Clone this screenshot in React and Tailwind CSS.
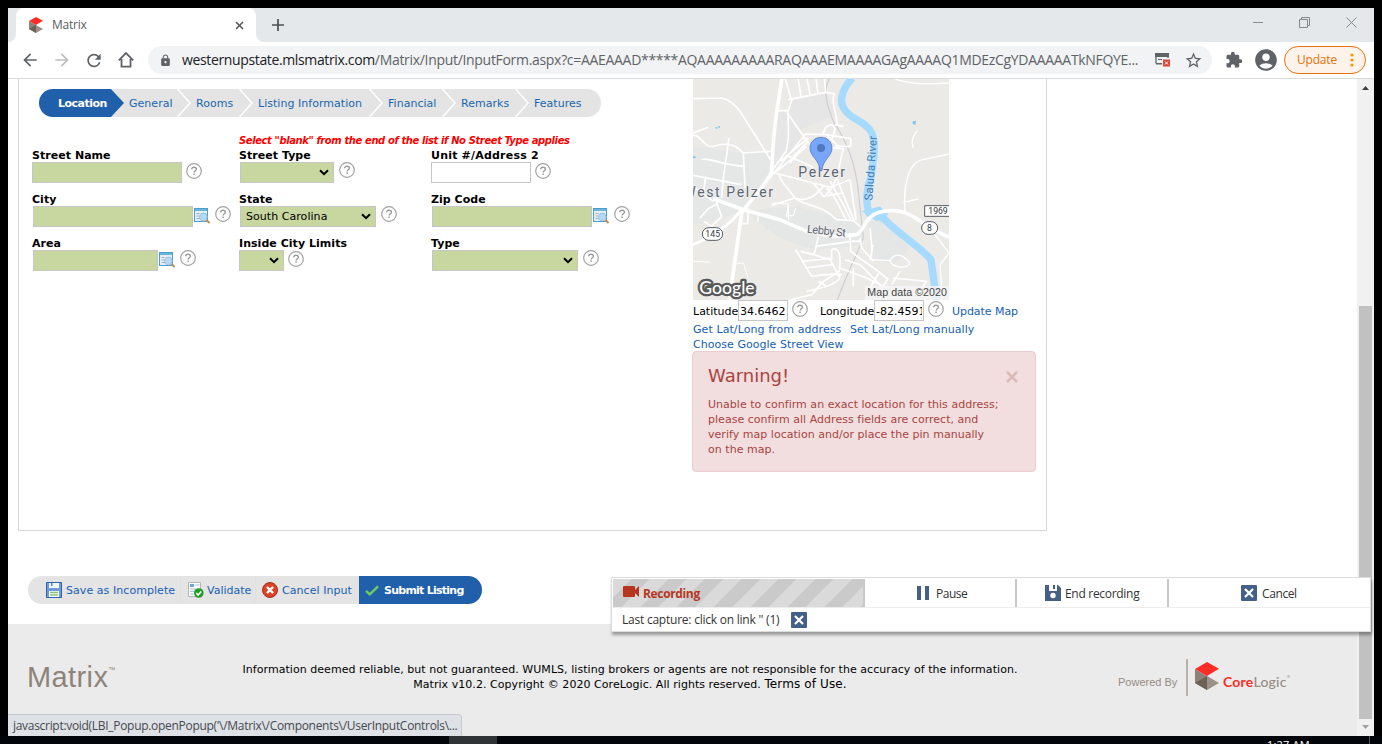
import React from "react";
import {
  MdArrowBack,
  MdArrowForward,
  MdRefresh,
  MdLock,
  MdStarBorder,
  MdExtension,
  MdAccountCircle,
} from "react-icons/md";

function CoreMark({ className }) {
  return (
    <svg viewBox="0 0 72 84" className={className} preserveAspectRatio="none">
      <path d="M0 21 36 42V84L0 63Z" fill="#8d8279" />
      <path d="M36 42 72 63 36 84Z" fill="#9c9188" />
      <path d="M36 42V84L0 63Z" fill="#6c6156" />
      <path d="M36 0 72 20 36 42 0 21Z" fill="#fb2d26" />
    </svg>
  );
}

function Help({ className = "" }) {
  return (
    <svg viewBox="0 0 16 16" className={"h-4 w-4 shrink-0 " + className}>
      <circle cx="8" cy="8" r="7.3" fill="#fff" stroke="#a3a3a3" strokeWidth="1.2" />
      <path
        d="M5.7 6.3C5.7 4.9 6.6 4.2 8 4.2s2.4.8 2.4 2c0 1.5-2.3 1.6-2.3 3.3M8.1 10.6v1.5"
        fill="none"
        stroke="#9a9a9a"
        strokeWidth="1.4"
      />
    </svg>
  );
}

function Lookup() {
  return (
    <svg viewBox="0 0 17 16" className="mt-[2px] ml-px h-4 w-[17px] shrink-0">
      <rect x=".5" y=".5" width="13" height="13" fill="#e3eef5" stroke="#4a9fcb" />
      <path d="M1 1h12v2H1z" fill="#6cb4d8" />
      <path d="M2.500 5.500h3M2.500 8h3M2.500 10.500h4M7 5.500h5" stroke="#a3b1b9" strokeWidth="1" />
      <circle cx="9.300" cy="9" r="3.800" fill="#b5d9f5" stroke="#9cc4e6" />
      <path d="m12.500 12 3 3" stroke="#c08c4f" strokeWidth="2" />
    </svg>
  );
}

function Label({ children }) {
  return (
    <div className="h-[14px] text-[11px] leading-[16px] font-bold tracking-[0.04px] whitespace-nowrap">{children}</div>
  );
}

function Field({ className = "" }) {
  return <div className={"h-[21px] shrink-0 border border-[#c6c6c6] bg-[#c8d69f] " + className} />;
}

function Select({ className = "", children }) {
  return (
    <div
      className={
        "flex h-[21px] shrink-0 items-center justify-between border border-[#c6c6c6] bg-[#c8d69f] pr-[4px] pl-[5px] text-[11px] " +
        className
      }
    >
      <span className="pt-[2px] tracking-[0.05px] whitespace-nowrap">{children}</span>
      <svg viewBox="0 0 10 7" className="h-[7px] w-[10px] shrink-0">
        <path d="m1 1.200 4 4 4-4" fill="none" stroke="#000" strokeWidth="2" />
      </svg>
    </div>
  );
}

function Chevron() {
  return (
    <svg viewBox="0 0 14 28" className="h-7 w-[14px] shrink-0 bg-[#e4e4e4]">
      <path d="M.5 0 13 14 .5 28" fill="none" stroke="#fff" strokeWidth="1.500" />
    </svg>
  );
}

function Step({ className, children }) {
  return <div className={"h-7 shrink-0 bg-[#e4e4e4] pl-[5px] whitespace-nowrap " + className}>{children}</div>;
}

function Steps() {
  return (
    <div className="ml-5 flex h-7 text-[11px] leading-[30px] tracking-[0.03px] text-[#1b66ae]">
      <div className="h-7 w-[72px] shrink-0 rounded-l-[14px] bg-[#205fa9] pl-[19px] font-bold tracking-[-0.5px] text-white">
        Location
      </div>
      <svg viewBox="0 0 13 28" className="h-7 w-[13px] shrink-0 bg-[#e4e4e4]">
        <path d="M0 0 13 14 0 28Z" fill="#205fa9" />
      </svg>
      <Step className="w-[53px]">General</Step>
      <Chevron />
      <Step className="w-[48px]">Rooms</Step>
      <Chevron />
      <Step className="w-[116px]">Listing Information</Step>
      <Chevron />
      <Step className="w-[59px]">Financial</Step>
      <Chevron />
      <Step className="w-[59px]">Remarks</Step>
      <Chevron />
      <Step className="w-[72px] rounded-r-[14px]">Features</Step>
    </div>
  );
}

function Map() {
  const label = { fontFamily: "Roboto, sans-serif", fill: "#5d6672" };
  return (
    <svg viewBox="39 3 768 663" preserveAspectRatio="none" className="block h-[221px] w-[256px]">
      <rect x="39" y="3" width="768" height="663" fill="#ebeae7" />
      <path d="M335 68 440 45 470 110 420 130 340 165 290 270 340 150 325 105Z" fill="#e6e6e6" />
      <path d="M285 100H330L370 175 320 250 280 275Z" fill="#e6e6e6" />
      <path d="M39 205 190 225 275 220V280L190 395 130 420 39 440Z" fill="#e5e6e6" />
      <path d="M200 400 350 385 440 410 520 425 545 460 540 500 400 515 300 480 230 430Z" fill="#e5e6e6" />
      <path d="M560 430 605 430 690 510 640 560 580 540Z" fill="#e5e6e6" />
      <path
        d="M517 0C480 40 480 75 492 92 510 125 560 130 575 165 590 200 580 250 572 300 555 350 558 380 568 407 590 415 600 415 615 425 650 465 720 505 753 545L770 670"
        fill="none"
        stroke="#a6daff"
        strokeWidth="22"
      />
      <path d="M545 400 600 385 625 410 590 430Z" fill="#a6daff" />
      <path
        d="M450 0C430 30 435 70 460 130 500 190 525 250 535 340L550 480C530 530 500 590 472 666"
        fill="none"
        stroke="#cdced1"
        strokeWidth="3.500"
      />
      <g fill="none" stroke="#fff" strokeWidth="5" strokeLinejoin="round">
        <path d="M39 62 125 60C150 65 165 80 180 100L272 245" />
        <path d="M315 0 335 68 322 105 378 185M325 65 437 43 433 0M354 0 364 60M381 0 391 55M408 0 414 48" />
        <path d="M288 98H325M325 105C322 150 332 170 318 220L275 280M320 232 400 268" />
        <path d="M39 173C60 165 70 210 100 205 145 190 175 205 188 225L272 220M190 225 195 330M147 180 130 300 125 360M65 245C80 235 120 260 192 265" />
        <path d="M39 292 185 320M77 295 68 360M45 330 100 370M39 165 85 148" />
        <path d="M112 350 110 375 125 415 95 445 72 430M60 420 85 392 112 378M205 390 203 437H185" />
        <path d="M437 43 463 47C450 80 475 110 470 140M436 155 428 168C435 140 460 130 465 155L455 185M465 140 490 145" />
        <path d="M370 168 440 170 512 182V205H465M340 235 385 190M375 170 270 300M300 250 385 180M330 255 360 220M290 280 345 235 380 205" />
        <path d="M378 185 395 205M405 205 490 212 470 300 455 330 432 358M480 208 488 215M440 170 475 205" />
        <path d="M285 285 400 315 450 328 510 305 528 425M400 315 430 355 455 350 490 345M295 285C305 320 325 330 345 360L275 382M345 360C370 370 400 365 430 325" />
        <path d="M345 360C370 385 420 375 470 425L520 428 540 445M450 310 490 380 512 425M470 300 500 375 522 428M440 330 462 355 500 428" />
        <path d="M275 375 325 378 320 415 340 412 347 390M325 378 326 425M234 410V432" strokeWidth="3.500" />
        <path d="M415 475 405 520 400 532M405 505 515 490M347 515 395 595C430 590 460 585 485 590M362 520 400 530 450 545 480 600" />
        <path d="M365 550 420 545 450 540M375 570 460 560M455 545V515C475 505 485 530 478 580L430 610 395 650 330 666M415 610 440 625" />
        <path d="M510 475 512 520 545 545C570 560 590 575 625 605M570 450C575 500 580 520 570 545M540 480 545 510 580 550M515 490H545" />
        <path d="M495 545 540 560 600 620 620 666M480 570 560 600 620 630M600 580 570 630M625 600 600 640M520 570V625M640 600 740 610 710 650M660 580 635 620" />
        <path d="M575 545 630 548C640 530 660 520 690 555 680 575 640 570 630 548M580 500 570 545" strokeWidth="4" />
        <path d="M675 400C670 340 680 250 730 245L807 228M700 210C690 180 705 170 712 158M670 373 715 363M640 0C680 20 740 20 807 15M765 470 807 525 780 560 785 630" strokeWidth="4" />
        <path d="M165 558 190 555 205 600M39 550 90 552" strokeWidth="3" />
      </g>
      <g fill="none" stroke="#fff">
        <path d="M306 0C290 100 278 170 275 280 260 320 215 360 185 405L148 666" strokeWidth="11" />
        <path d="M39 500C100 475 150 440 185 395" strokeWidth="9" />
        <path d="M100 362 190 395 300 425 380 460 460 475 530 470C555 460 550 410 610 400 690 385 720 440 807 478" strokeWidth="11" />
        <path d="M380 640C420 630 460 625 480 600" strokeWidth="4" />
      </g>
      <path d="M107 147h5v5h-5zM115 144h5v5h-5zM698 130l10-2-2 13-8-3zM39 235h8v5h-8z" fill="#7fc8f5" />
      <g style={label} stroke="#f2f2f1" strokeWidth="5" paintOrder="stroke">
        <text x="355" y="297" fontSize="42" textLength="140">Pelzer</text>
        <text x="10" y="357" fontSize="42" textLength="269">West Pelzer</text>
        <text x="380" y="464" fontSize="34" textLength="117" transform="rotate(6 380 464)">Lebby St</text>
      </g>
      <text
        x="0"
        y="0"
        fontSize="34"
        textLength="194"
        transform="translate(577 368) rotate(-86)"
        style={{ fontFamily: "Roboto, sans-serif", fill: "#437fb8" }}
      >
        Saluda River
      </text>
      <g fill="#fff" stroke="#555b63" strokeWidth="3">
        <rect x="67" y="449" width="61" height="38" rx="19" />
        <rect x="725" y="431" width="48" height="38" rx="19" />
        <path d="M807 383H734V415H807" />
      </g>
      <g style={{ fontFamily: "Roboto, sans-serif", fill: "#333a42" }} fontSize="26">
        <text x="76" y="477" textLength="44">145</text>
        <text x="741" y="459">8</text>
        <text x="745" y="408" textLength="58">1969</text>
      </g>
      <path
        d="M423 178C404 178 390 192 390 210 390 236 418 244 420 278H426C428 244 456 236 456 210 456 192 442 178 423 178Z"
        fill="#76a7fc"
        stroke="#4a6fae"
        strokeWidth="2"
      />
      <circle cx="423" cy="210" r="12" fill="#4f79bc" />
      <text
        x="58"
        y="649"
        fontSize="52"
        textLength="166"
        lengthAdjust="spacingAndGlyphs"
        stroke="#5a5a5a"
        strokeWidth="14"
        strokeLinejoin="round"
        paintOrder="stroke"
        fill="#fff"
        style={{ fontFamily: "Lato, sans-serif", fontWeight: 500 }}
      >
        Google
      </text>
      <rect x="555" y="624" width="252" height="42" fill="#f5f5f5" fillOpacity=".85" />
      <text x="562" y="654" fontSize="32" textLength="239" fill="#444" style={{ fontFamily: "'Liberation Sans', Arial, sans-serif" }}>
        Map data ©2020
      </text>
    </svg>
  );
}

function TopChrome() {
  return (
    <>
      <div className="flex h-[34px] bg-[#e4e8eb] font-['Open_Sans',sans-serif]">
        <div className="flex w-2 items-end bg-white">
          <div className="h-[34px] w-2 rounded-br-[8px] bg-[#e4e8eb]" />
        </div>
        <div className="flex w-60 items-center rounded-t-[8px] bg-white pl-[13px]">
          <CoreMark className="h-4 w-[14px]" />
          <span className="ml-[9px] w-[35px] text-[12px] tracking-[-0.25px] text-[#5a5d61]">Matrix</span>
          <svg viewBox="0 0 9 9" className="ml-[148px] h-[9px] w-[9px]">
            <path d="m1 1 7 7M8 1 1 8" stroke="#55585c" strokeWidth="1.600" />
          </svg>
        </div>
        <div className="w-2 bg-white">
          <div className="h-[34px] w-2 rounded-bl-[8px] bg-[#e4e8eb]" />
        </div>
        <svg viewBox="0 0 12 12" className="mt-[11px] ml-2 h-3 w-3">
          <path d="M6 0v12M0 6h12" stroke="#4d5054" strokeWidth="1.700" />
        </svg>
        <div className="mt-[8px] mr-[17px] ml-auto flex h-[12px] items-center gap-9">
          <svg viewBox="0 0 10 10" className="h-[10px] w-[10px]">
            <path d="M0 5.500h10" stroke="#8a8d90" />
          </svg>
          <svg viewBox="0 0 11 11" className="h-[11px] w-[11px]">
            <path d="M.5 2.500h8v8h-8zM2.500 2.500V.5h8v8h-2" fill="none" stroke="#85888b" />
          </svg>
          <svg viewBox="0 0 11 11" className="h-[11px] w-[11px]">
            <path d="m.5.5 10 10M10.500.5.5 10.500" stroke="#85888b" />
          </svg>
        </div>
      </div>
      <div className="flex h-[37px] items-center border-b border-[#d9dadc] bg-white pl-3 font-['Open_Sans',sans-serif] text-[#5f6368]">
        <div className="flex gap-3">
          <MdArrowBack className="h-5 w-5" />
          <MdArrowForward className="h-5 w-5 text-[#bcbec1]" />
          <MdRefresh className="h-[21px] w-5" />
          <svg viewBox="0 0 20 20" className="h-5 w-5">
            <path d="M2.800 10.300 10 3l7.200 7.300M5.500 9v7.700h9V9" fill="none" stroke="#5f6368" strokeWidth="1.800" />
          </svg>
        </div>
        <div className="ml-3 flex h-7 w-[1064px] items-center rounded-full bg-[#f1f3f4]">
          <MdLock className="ml-[11px] h-[13px] w-[13px]" />
          <div className="ml-[10px] w-[964px] text-[14px] leading-[26px] tracking-[-0.31px] whitespace-nowrap">
            <span className="tracking-[-0.36px] text-[#202124]">westernupstate.mlsmatrix.com</span>
            /Matrix/Input/InputForm.aspx?c=AAEAAAD*****AQAAAAAAAAARAQAAAEMAAAAGAgAAAAQ1MDEzCgYDAAAAATkNFQYE...
          </div>
          <svg viewBox="0 0 15 14" className="ml-[9px] h-[14px] w-[15px]">
            <path d="M1 10.500V1h12v4" fill="none" stroke="#5f6368" strokeWidth="1.300" />
            <path d="M0 0h14v4H0zM1 10h6v1.500H1zM3 6h4v1H3z" fill="#5f6368" />
            <rect x="8" y="6.500" width="7" height="7" fill="#db4437" />
            <path d="m10 8.500 3 3m0-3-3 3" stroke="#fff" />
          </svg>
          <MdStarBorder className="ml-[14px] h-[19px] w-[19px]" />
        </div>
        <MdExtension className="ml-[13px] h-[18px] w-[18px]" />
        <MdAccountCircle className="ml-[10px] h-[26px] w-[26px]" />
        <div className="ml-[5px] flex h-7 w-[82px] items-center rounded-full border border-[#e8710a] bg-[#fdf3ea] pl-3 text-[12px] text-[#e8710a]">
          <span className="w-[39px] tracking-[-0.2px]">Update</span>
          <svg viewBox="0 0 4 14" className="ml-[14px] h-[14px] w-1">
            <circle cx="2" cy="2" r="1.600" fill="#f29900" />
            <circle cx="2" cy="7" r="1.600" fill="#f29900" />
            <circle cx="2" cy="12" r="1.600" fill="#f29900" />
          </svg>
        </div>
      </div>
    </>
  );
}

function Form() {
  return (
    <div className="w-[674px] shrink-0 pt-[10px]">
      <Steps />
      <div className="mt-[17px] ml-[220px] h-[14px] text-[10px] leading-[14px] font-bold tracking-[-0.4px] whitespace-nowrap text-[#f00] italic">
        Select "blank" from the end of the list if No Street Type applies
      </div>
      <div className="ml-[13px] grid grid-cols-[207px_192px_220px] grid-rows-[44px_44px_44px]">
        <div>
          <Label>Street Name</Label>
          <div className="flex">
            <Field className="w-[150px]" />
            <Help className="ml-1 mt-px" />
          </div>
        </div>
        <div>
          <Label>Street Type</Label>
          <div className="ml-px flex">
            <Select className="w-[94px]" />
            <Help className="ml-[5px]" />
          </div>
        </div>
        <div>
          <Label>
            <span className="tracking-[0.2px]">Unit #/Address 2</span>
          </Label>
          <div className="flex">
            <div className="h-[21px] w-[100px] border border-[#c6c6c6] bg-white" />
            <Help className="ml-1 mt-px" />
          </div>
        </div>
        <div>
          <Label>City</Label>
          <div className="ml-px flex">
            <Field className="w-[160px]" />
            <Lookup />
            <Help className="ml-1" />
          </div>
        </div>
        <div>
          <Label>State</Label>
          <div className="ml-px flex">
            <Select className="w-[136px]">South Carolina</Select>
            <Help className="ml-[5px]" />
          </div>
        </div>
        <div>
          <Label>Zip Code</Label>
          <div className="ml-px flex">
            <Field className="w-[160px]" />
            <Lookup />
            <Help className="ml-1" />
          </div>
        </div>
        <div>
          <Label>Area</Label>
          <div className="ml-px flex">
            <Field className="w-[125px]" />
            <Lookup />
            <Help className="ml-1" />
          </div>
        </div>
        <div>
          <Label>Inside City Limits</Label>
          <div className="flex">
            <Select className="w-[45px]" />
            <Help className="ml-1 mt-px" />
          </div>
        </div>
        <div>
          <Label>Type</Label>
          <div className="ml-px flex">
            <Select className="w-[146px]" />
            <Help className="ml-[5px]" />
          </div>
        </div>
      </div>
    </div>
  );
}

function MapColumn() {
  return (
    <div className="w-[353px] text-[11px] whitespace-nowrap">
      <Map />
      <div className="flex h-[21px] leading-[24px]">
        <span className="w-[45px]">Latitude</span>
        <span className="h-[21px] w-[50px] overflow-hidden border border-[#c6c6c6] bg-white pl-px leading-[22px]">34.6462</span>
        <Help className="ml-1 mt-px" />
        <span className="ml-3 w-[54px] tracking-[-0.05px]">Longitude</span>
        <span className="h-[21px] w-[50px] overflow-hidden border border-[#c6c6c6] bg-white pl-px leading-[22px]">
          <span className="block w-[46px] overflow-hidden">-82.4591</span>
        </span>
        <Help className="ml-1 mt-px" />
        <span className="ml-2 tracking-[-0.05px] text-[#1460b8]">Update Map</span>
      </div>
      <div className="flex h-[15px] gap-2 leading-[17px] text-[#1460b8]">
        <span className="w-[149px] tracking-[0.08px]">Get Lat/Long from address</span>
        <span className="tracking-[0.05px]">Set Lat/Long manually</span>
      </div>
      <div className="h-[15px] leading-[17px] tracking-[0.04px] text-[#1460b8]">Choose Google Street View</div>
      <div className="-ml-px h-[121px] w-[344px] rounded-[4px] border border-[#ebccd1] bg-[#f2dede] text-[#a94442]">
        <div className="flex h-[45px] items-center pt-[5px] pr-[17px] pl-[15px]">
          <span className="-mt-[3px] text-[18px]">Warning!</span>
          <svg viewBox="0 0 12 12" className="ml-auto h-3 w-3">
            <path d="m1 1 10 10M11 1 1 11" stroke="#ddb9ba" strokeWidth="2.500" />
          </svg>
        </div>
        <div className="pl-[15px] leading-[15px] tracking-[0.03px]">
          Unable to confirm an exact location for this address;
          <br />
          please confirm all Address fields are correct, and
          <br />
          verify map location and/or place the pin manually
          <br />
          on the map.
        </div>
      </div>
    </div>
  );
}

function ActionBar() {
  return (
    <div className="mt-[45px] ml-5 flex h-7 w-[454px] overflow-hidden rounded-full bg-[#e4e4e4] text-[11px] text-[#1460b8]">
      <div className="flex w-[153px] items-center border-r border-[#e0e0e0] pl-[18px]">
        <svg viewBox="0 0 16 16" className="h-4 w-4">
          <path d="M.5.5h15v15h-15z" fill="#6f9bd8" stroke="#2f62ad" />
          <path d="M3 1h10v5H3z" fill="#f3f7fc" />
          <path d="M5 1h1.500v3H5z" fill="#5580bd" />
          <path d="M3 9h10v6H3z" fill="#fff" />
          <path d="M4 10.500h8M4 13h8" stroke="#8cc07a" strokeWidth="1.500" />
        </svg>
        <span className="ml-1 pt-[2px] tracking-[0.06px]">Save as Incomplete</span>
      </div>
      <div className="flex w-[75px] items-center border-r border-[#e0e0e0] pl-[7px]">
        <svg viewBox="0 0 16 16" className="h-4 w-4">
          <path d="M.5.5h12v14H.5z" fill="#fbfbfb" stroke="#b5b5b5" />
          <path d="M2 2h4v3H2z" fill="#6fa6dc" />
          <path d="M7.500 3h4M2 7h6M2 9.500h4M2 12h4" stroke="#a7c4dd" />
          <circle cx="10.800" cy="11" r="4.800" fill="#1fa025" />
          <path d="m8.300 11 1.800 2 3.200-3.500" fill="none" stroke="#fff" strokeWidth="1.600" />
        </svg>
        <span className="ml-[3px] pt-[2px]">Validate</span>
      </div>
      <div className="flex w-[102px] items-center pl-[6px]">
        <svg viewBox="0 0 16 16" className="h-4 w-4">
          <circle cx="8" cy="8" r="7.500" fill="#d9432a" stroke="#a82d1c" />
          <path d="m5 5 6 6m0-6-6 6" stroke="#fff" strokeWidth="2.400" />
        </svg>
        <span className="ml-1 pt-[2px] tracking-[0.06px] whitespace-nowrap">Cancel Input</span>
      </div>
      <div className="ml-px flex w-[123px] items-center bg-[#205fa9] pl-[6px] font-bold text-white">
        <svg viewBox="0 0 14 11" className="h-[11px] w-[14px]">
          <path d="m1 5.800 3.800 3.500L13 1.300" fill="none" stroke="#6fca63" strokeWidth="2.500" />
        </svg>
        <span className="ml-[5px] pt-[2px] tracking-[-0.75px] whitespace-nowrap">Submit Listing</span>
      </div>
    </div>
  );
}

function Footer() {
  return (
    <div className="mt-5 flex h-28 bg-[#ebebeb] font-['DejaVu_Sans',Verdana,sans-serif] text-[11px] leading-[15px]">
      <div className="flex w-[192px] shrink-0 pt-[38px] pl-[19px] font-['Liberation_Sans',Arial,sans-serif] text-[#8d847b]">
        <span className="text-[29px] leading-[30px] tracking-[0.4px]">Matrix</span>
        <span className="mt-[4px] text-[7px] leading-[8px]">™</span>
      </div>
      <div className="w-[860px] shrink-0 pt-[38px] text-center tracking-[0.05px] whitespace-nowrap">
        Information deemed reliable, but not guaranteed. WUMLS, listing brokers or agents are not responsible for the accuracy of the
        information.
        <br />
        Matrix v10.2. Copyright © 2020 CoreLogic. All rights reserved.{" "}
        <span className="text-[12px] tracking-[0.12px]">Terms of Use.</span>
      </div>
      <div className="mt-[35px] ml-[58px] flex h-[38px]">
        <span className="mt-[16px] w-[61px] font-['Liberation_Sans',Arial,sans-serif] text-[11px] whitespace-nowrap text-[#958b83]">
          Powered By
        </span>
        <div className="ml-[7px] h-[37px] w-[2px] bg-[#bcb1a9]" />
        <CoreMark className="mt-[3px] ml-[7px] h-7 w-6" />
        <span className="mt-[14px] ml-1 font-[Lato,sans-serif] text-[14px] leading-[17px] font-bold tracking-[0.2px] text-[#fb2d26]">
          Core<span className="font-medium text-[#958b83]">Logic</span>
        </span>
        <span className="mt-[15px] text-[4px] leading-[6px] text-[#958b83]">®</span>
      </div>
    </div>
  );
}

function CloseBox() {
  return (
    <svg viewBox="0 0 16 16" className="h-4 w-4">
      <rect width="16" height="16" rx="1" fill="#456087" />
      <path d="m4 4 8 8m0-8-8 8" stroke="#fff" strokeWidth="2.200" />
    </svg>
  );
}

function Recorder() {
  return (
    <div className="absolute top-[577px] left-[611px] h-[55px] w-[760px] border border-[#dcdcdc] bg-white pt-px pl-px font-['Open_Sans',sans-serif] text-[12px] text-[#333] shadow-[1px_3px_3px_rgba(0,0,0,0.35)]">
      <div className="flex h-[29px] border-b border-[#ececec] whitespace-nowrap">
        <div className="flex w-[252px] items-center border-r-2 border-[#c9c9c9] bg-[repeating-linear-gradient(135deg,#dadada_0px,#dadada_13px,#cacaca_13px,#cacaca_26px)] pl-[10px]">
          <svg viewBox="0 0 16 12" className="-mt-[2px] h-3 w-4">
            <path d="M0 1q0-1 1-1h10q1 0 1 1v3l4-4v11l-4-4v3q0 1-1 1H1q-1 0-1-1z" fill="#b7351e" />
          </svg>
          <span className="ml-1 pt-px font-bold tracking-[-0.35px] text-[#b7351e]">Recording</span>
        </div>
        <div className="flex w-[152px] items-center border-r-2 border-[#c9c9c9] pl-[52px]">
          <svg viewBox="0 0 12 14" className="h-[14px] w-3">
            <path d="M0 0h4v14H0zM8 0h4v14H8z" fill="#456087" />
          </svg>
          <span className="ml-[7px] pt-px tracking-[-0.5px]">Pause</span>
        </div>
        <div className="flex w-[152px] items-center border-r-2 border-[#c9c9c9] pl-[28px]">
          <svg viewBox="0 0 16 16" className="h-4 w-4">
            <path d="M0 0h4v6h8V0h1l3 3v13H0zM8 0h2v4H8z" fill="#456087" />
            <circle cx="8" cy="10.500" r="2.700" fill="#fff" />
          </svg>
          <span className="ml-1 pt-px tracking-[-0.3px]">End recording</span>
        </div>
        <div className="flex flex-1 items-center pl-[72px]">
          <CloseBox />
          <span className="ml-[5px] pt-px tracking-[-0.4px]">Cancel</span>
        </div>
      </div>
      <div className="flex h-6 items-center pl-[9px] whitespace-nowrap">
        <span className="-mt-px w-[169px] tracking-[-0.23px]">Last capture: click on link '' (1)</span>
        <CloseBox />
      </div>
    </div>
  );
}

function Scrollbar() {
  return (
    <div className="flex h-[657px] w-[17px] shrink-0 flex-col items-center bg-[#f1f1f1]">
      <svg viewBox="0 0 7 4" className="mt-[7px] h-1 w-[7px]">
        <path d="M3.500 0 7 4H0z" fill="#404040" />
      </svg>
      <div className="mt-[216px] h-[413px] w-[13px] bg-[#c1c1c1]" />
      <svg viewBox="0 0 7 4" className="mt-[6px] h-1 w-[7px]">
        <path d="M3.500 4 7 0H0z" fill="#a0a0a0" />
      </svg>
    </div>
  );
}

export default function App() {
  return (
    <div className="relative h-[744px] w-[1382px] overflow-hidden bg-black px-2 pt-2">
      <div className="h-[728px] w-[1366px] overflow-hidden bg-white">
        <TopChrome />
        <div className="flex h-[657px] font-['DejaVu_Sans',Verdana,sans-serif] text-black">
          <div className="w-[1349px] shrink-0">
            <div className="ml-[10px] flex h-[452px] w-[1029px] border-x border-b border-[#d6d6d6]">
              <Form />
              <MapColumn />
            </div>
            <ActionBar />
            <Footer />
          </div>
          <Scrollbar />
        </div>
      </div>
      <div className="-mx-2 flex h-2 overflow-hidden bg-[#02050a] font-['Open_Sans',sans-serif] text-[11px] leading-[14px] text-white">
        <div className="ml-[449px] h-2 w-12 shrink-0 bg-[#303336]" />
        <span className="mt-[2px] ml-[770px] w-[102px] shrink-0 tracking-[0.2px]">1:27 AM</span>
        <div className="h-2 w-px shrink-0 bg-[#55585b]" />
      </div>
      <Recorder />
      <div className="absolute top-[714px] left-2 h-[22px] w-[454px] overflow-hidden rounded-tr-[4px] border-t border-r border-[#c6c9cf] bg-[#dee1e6] pl-[5px] font-['Open_Sans',sans-serif] text-[12px] leading-[22px] tracking-[-0.3px] whitespace-nowrap text-[#46494d]">
        javascript:void(LBI_Popup.openPopup('\/Matrix\/Components\/UserInputControls\...
      </div>
    </div>
  );
}
